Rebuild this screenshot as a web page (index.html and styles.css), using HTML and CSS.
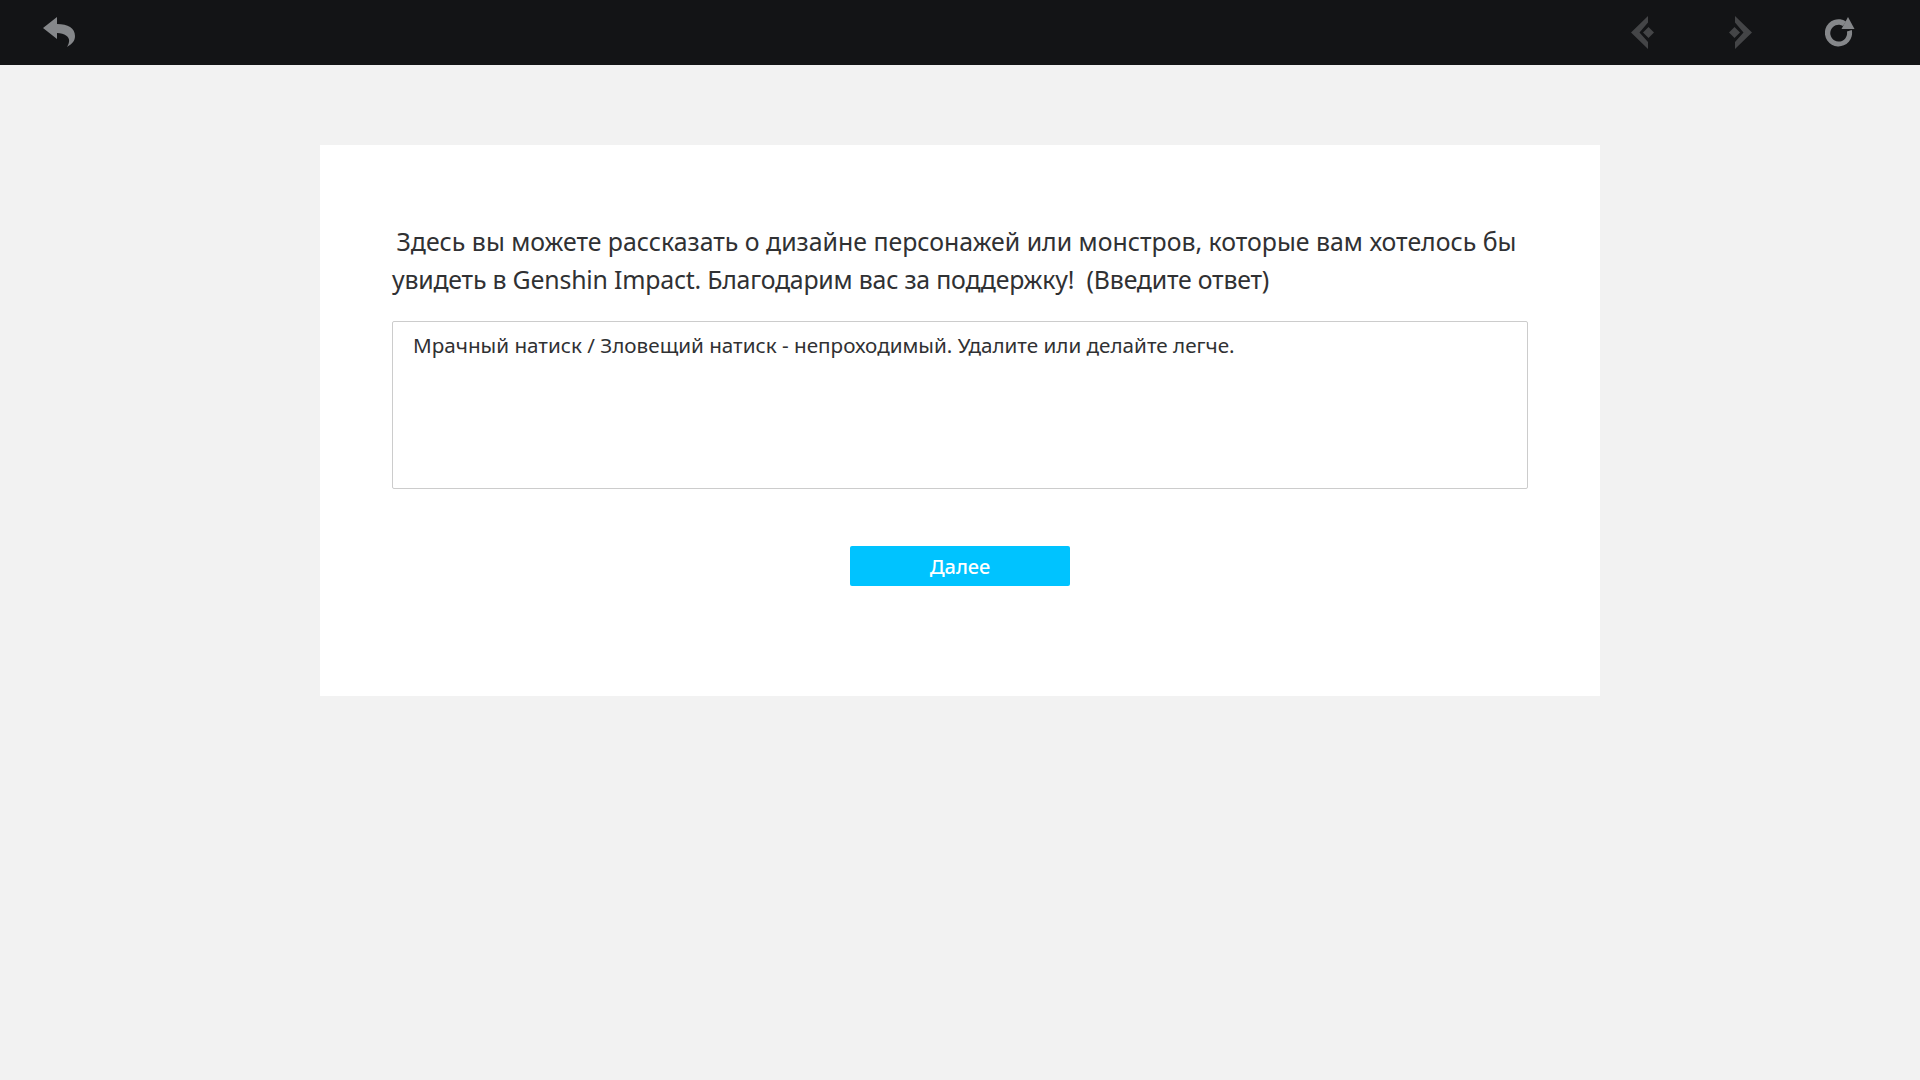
FILE: index.html
```html
<!DOCTYPE html>
<html lang="ru">
<head>
<meta charset="utf-8">
<title>Опрос</title>
<link rel="stylesheet" href="styles.css">
</head>
<body>
<header class="topbar">
  <svg class="icon back" viewBox="0 0 32 31" width="32" height="31"><path d="M0 11 L14 0 L14 7 C25 7 32 11 32 19 C32 24 29 27 24 30 C27 25 27 21 23 18.500 C21 17 18 16 14 16 L14 22 Z"/></svg>
  <div class="nav-group">
    <svg class="icon dim" viewBox="0 0 23 33" width="23" height="33"><path d="M0 16.500 L17 0 L17 6.500 L8.500 16.500 L17 26 L17 33 Z"/><path d="M17.500 11 L23 16.500 L17.500 22 L12 16.500 Z"/></svg>
    <svg class="icon dim" viewBox="0 0 23 33" width="23" height="33"><path d="M23 16.500 L6 0 L6 6.500 L14.500 16.500 L6 26 L6 33 Z"/><path d="M5.500 11 L0 16.500 L5.500 22 L11 16.500 Z"/></svg>
    <svg class="icon reload" viewBox="0 0 30 31" width="30" height="31"><path d="M26.800 13 A13.600 13.600 0 1 1 21 4.500 L18 9 A8.400 8.400 0 1 0 21.900 14.500 Z"/><path d="M23 0 L29.500 12 L16.500 12 Z"/></svg>
  </div>
</header>
<main class="page">
  <section class="card">
    <p class="question">&nbsp;Здесь вы можете рассказать о дизайне персонажей или монстров, которые вам хотелось бы <span class="tight">увидеть в Genshin Impact. Благодарим вас за поддержку!&nbsp; (Введите ответ)</span></p>
    <div class="answer">Мрачный натиск / Зловещий натиск - непроходимый. Удалите или делайте легче.</div>
    <div class="actions"><button class="next" type="button">Далее</button></div>
  </section>
</main>
</body>
</html>
```
FILE: styles.css
```css
* { box-sizing: border-box; }
html, body { margin: 0; height: 100%; }
body { background: #f2f2f2; font-family: "Noto Sans", "Open Sans", sans-serif; overflow: hidden; }
.topbar { height: 65px; background: #131416; display: flex; align-items: center; justify-content: space-between; padding: 0 65px 0 43px; }
.icon { display: block; }
.back { fill: #85878a; }
.dim { fill: #444547; }
.reload { fill: #85878a; margin-left: -2px; }
.nav-group { display: flex; align-items: center; gap: 75px; }
.page { padding-top: 80px; display: flex; justify-content: center; }
.card { width: 1280px; height: 551px; background: #fff; padding: 77px 72px 0; }
.question { margin: 0; font-size: 24.87px; line-height: 38px; color: #303133; text-indent: -2px; }
.tight { letter-spacing: -0.21px; }
.answer { margin-top: 23px; height: 168px; border: 1px solid #ccc; border-radius: 2px; padding: 8px 20px; font-size: 20.65px; line-height: 30px; color: #303133; }
.actions { display: flex; justify-content: center; margin-top: 57px; }
.next { width: 220px; height: 40px; border: 0; border-radius: 2px; background: #00c3ff; color: #fff; font: 500 20px/42px "Noto Sans", sans-serif; padding: 0; }
```
